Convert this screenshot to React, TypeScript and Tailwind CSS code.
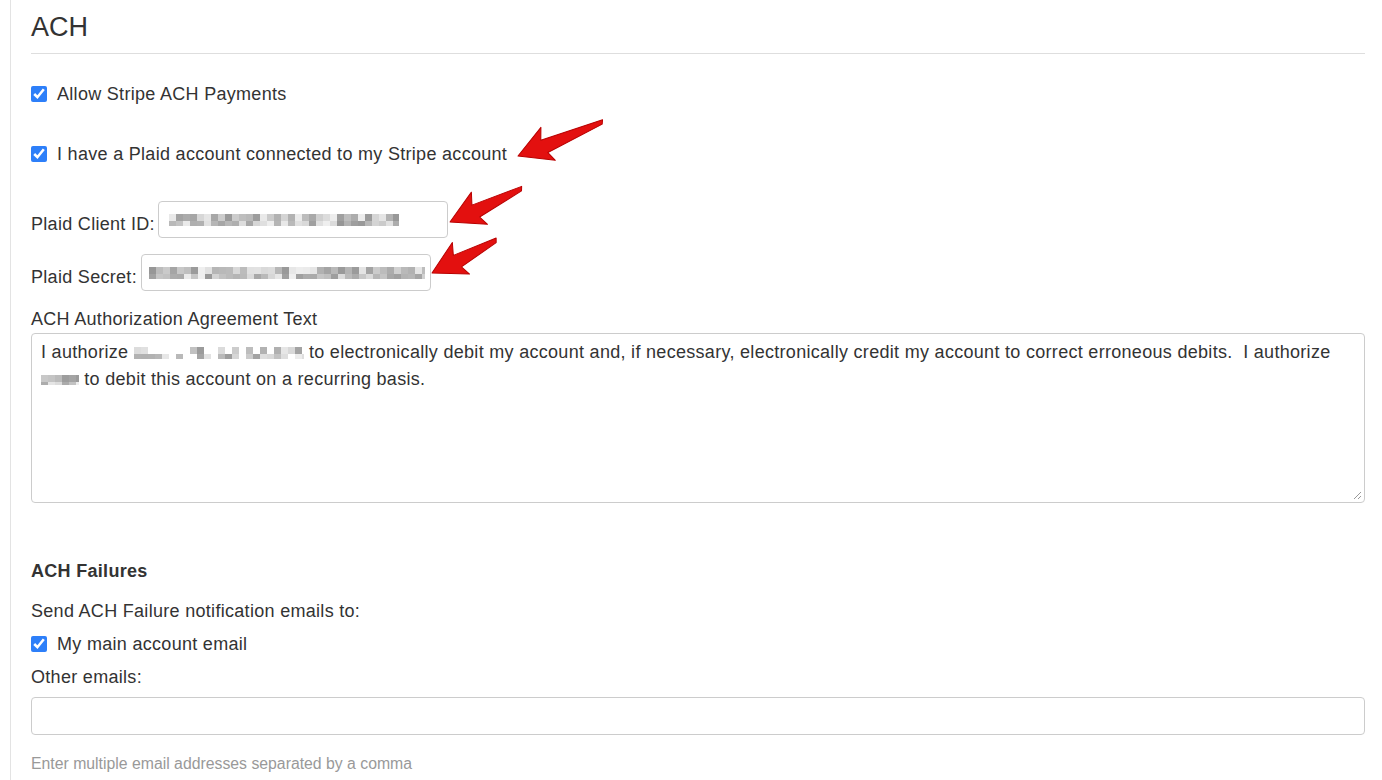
import React from "react";

// pixelated "redacted" text, drawn as small grey cells
const Blur = ({ width, seed, height = 14, sparse = false }: { width: number; seed: number; height?: number; sparse?: boolean }) => {
  const cells: JSX.Element[] = [];
  let s = seed;
  const rnd = () => {
    s = (s * 9301 + 49297) % 233280;
    return s / 233280;
  };
  const size = 7;
  for (let x = 0; x < width; x += size) {
    for (let y = 0; y < height; y += size) {
      const r = rnd();
      if (sparse && r < 0.45) continue;
      const g = Math.round(150 + rnd() * 90);
      cells.push(
        <rect key={`${x}-${y}`} x={x} y={y} width={size} height={size} fill={`rgb(${g},${g},${g})`} />
      );
    }
  }
  return (
    <svg width={width} height={height} className="inline-block align-middle">
      {cells}
    </svg>
  );
};

const Check = ({ label }: { label: string }) => (
  <label className="flex h-[24px] items-center gap-[10px]">
    <input type="checkbox" defaultChecked className="m-0 h-4 w-4 accent-[#2d7ff9]" />
    <span>{label}</span>
  </label>
);

// red callout arrow, tip at (x, y), tail pointing up-right
const Arrow = ({ x, y, len, angle }: { x: number; y: number; len: number; angle: number }) => (
  <g transform={`translate(${x} ${y}) rotate(${angle})`}>
    <path
      d={`M0,0 L32,-18 L27,-6 L${len},-2 L${len - 2},2 L29,8 L33,18 Z`}
      fill="#e3100f"
      stroke="#b80000"
      strokeWidth="1"
      strokeLinejoin="round"
    />
  </g>
);

export default function App() {
  return (
    <div className="relative min-h-screen bg-white font-['Liberation_Sans',Arial,sans-serif] text-[18px] tracking-[0.3px] text-[#333]">
      <div className="ml-[10px] min-h-[780px] border-l border-[#e3e3e3] pl-[20px] pr-[17px] pt-[11px]">
        <h2 className="text-[27px] leading-[32px] tracking-normal">ACH</h2>
        <div className="mt-[10px] border-t border-[#dedede]" />

        <div className="mt-[28px]">
          <Check label="Allow Stripe ACH Payments" />
        </div>
        <div className="mt-[36px]">
          <Check label="I have a Plaid account connected to my Stripe account" />
        </div>

        <div className="mt-[35px] flex items-start gap-[3px]">
          <span className="mt-[11px] leading-[24px]">Plaid Client ID:</span>
          <div className="flex h-[37px] w-[290px] items-center rounded-[4px] border border-[#ccc] pl-[10px]">
            <Blur width={230} seed={17} height={12} />
          </div>
        </div>
        <div className="mt-[16px] flex items-start gap-[4px]">
          <span className="mt-[11px] leading-[24px]">Plaid Secret:</span>
          <div className="flex h-[37px] w-[290px] items-center rounded-[4px] border border-[#ccc] pl-[7px]">
            <Blur width={276} seed={53} height={12} />
          </div>
        </div>

        <div className="mt-[16px] leading-[24px]">ACH Authorization Agreement Text</div>
        <div className="relative mt-[2px] h-[170px] rounded-[4px] border border-[#ccc] px-[9px] pt-[5px] leading-[27px]">
          <div className="whitespace-pre">
            I authorize <Blur width={170} seed={91} height={12} sparse /> to electronically debit my account and, if necessary, electronically credit my account to correct erroneous debits.{"  "}I authorize
          </div>
          <div className="whitespace-pre">
            <Blur width={38} seed={7} height={10} /> to debit this account on a recurring basis.
          </div>
          <svg width="10" height="10" className="absolute bottom-[2px] right-[2px]">
            <path d="M9 2 L2 9 M9 6 L6 9" stroke="#999" strokeWidth="1" />
          </svg>
        </div>

        <div className="mt-[56px] font-bold leading-[24px]">ACH Failures</div>
        <div className="mt-[16px] leading-[24px]">Send ACH Failure notification emails to:</div>
        <div className="mt-[9px]">
          <Check label="My main account email" />
        </div>
        <div className="mt-[9px] leading-[24px]">Other emails:</div>
        <input className="mt-[8px] block h-[38px] w-full rounded-[4px] border border-[#ccc] px-[10px] outline-none" />
        <div className="mt-[19px] text-[15.8px] leading-[20px] tracking-normal text-[#999]">
          Enter multiple email addresses separated by a comma
        </div>
      </div>

      <svg width="1382" height="780" className="pointer-events-none absolute left-0 top-0">
        <Arrow x={518} y={156} len={92} angle={-22} />
        <Arrow x={450} y={222} len={80} angle={-25} />
        <Arrow x={432} y={273} len={73} angle={-27} />
      </svg>
    </div>
  );
}
